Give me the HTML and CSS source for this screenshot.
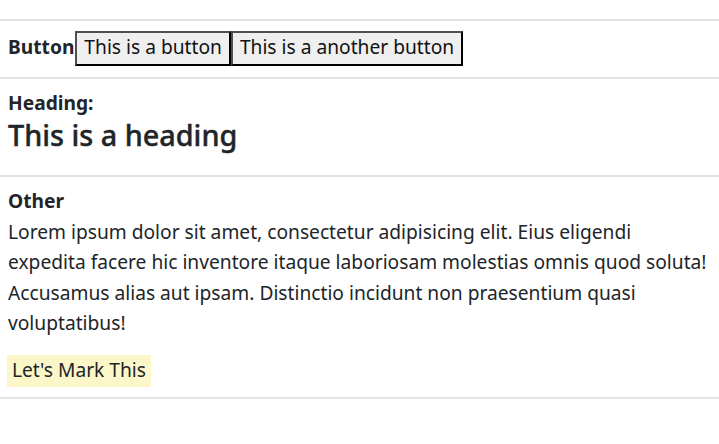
FILE: index.html
```html
<!DOCTYPE html>
<html lang="en">
<head>
<meta charset="utf-8">
<title>Elements</title>
<link rel="stylesheet" href="styles.css">
</head>
<body>
<main class="page">
  <section class="section">
    <div class="button-row">
      <strong class="label">Button</strong>
      <button class="btn" type="button">This is a button</button>
      <button class="btn" type="button">This is a another button</button>
    </div>
  </section>
  <section class="section">
    <strong class="label block">Heading:</strong>
    <h2 class="heading">This is a heading</h2>
  </section>
  <section class="section section-last">
    <strong class="label block">Other</strong>
    <p class="text">Lorem ipsum dolor sit amet, consectetur adipisicing elit. Eius eligendi expedita facere hic inventore itaque laboriosam molestias omnis quod soluta! Accusamus alias aut ipsam. Distinctio incidunt non praesentium quasi voluptatibus!</p>
    <div class="mark-row"><mark class="mark">Let's Mark This</mark></div>
  </section>
</main>
</body>
</html>
```
FILE: styles.css
```css
html, body {
  margin: 0;
  padding: 0;
  background: #fff;
}

body {
  font-family: "Noto Sans", "Open Sans", sans-serif;
  font-size: 19.2px;
  line-height: 1.5;
  color: #212529;
}

.page {
  padding-top: 19px;
}

.section {
  border-top: 2px solid #e1e3e6;
  padding: 10px 8px;
}

.section-last {
  border-bottom: 2px solid #e3e4e6;
}

.label {
  font-weight: 700;
  font-size: 19.2px;
}

.block {
  display: block;
}

.button-row {
  display: flex;
  align-items: baseline;
  margin-bottom: 1px;
}

.btn {
  font: inherit;
  line-height: 28.8px;
  color: #111;
  background: #efefef;
  border: 2px solid;
  border-color: #4f4f4f #000 #000 #4f4f4f;
  border-radius: 0;
  padding: 0 7px 2px;
  margin: 0 0 0 1px;
}

.btn + .btn {
  margin-left: 0;
}

.heading {
  font-size: 28.8px;
  font-weight: 500;
  -webkit-text-stroke: 0.4px currentColor;
  line-height: 1.2;
  margin: 0 0 12.8px;
}

.text {
  line-height: 30.4px;
  margin: 1px 0 16.6px;
}

.mark-row {
  display: flex;
}

.mark {
  display: inline-block;
  background: #fcf7c8;
  color: #212529;
  line-height: 26px;
  padding: 2px 4.6px 4px;
  margin-left: -0.7px;
}
```
